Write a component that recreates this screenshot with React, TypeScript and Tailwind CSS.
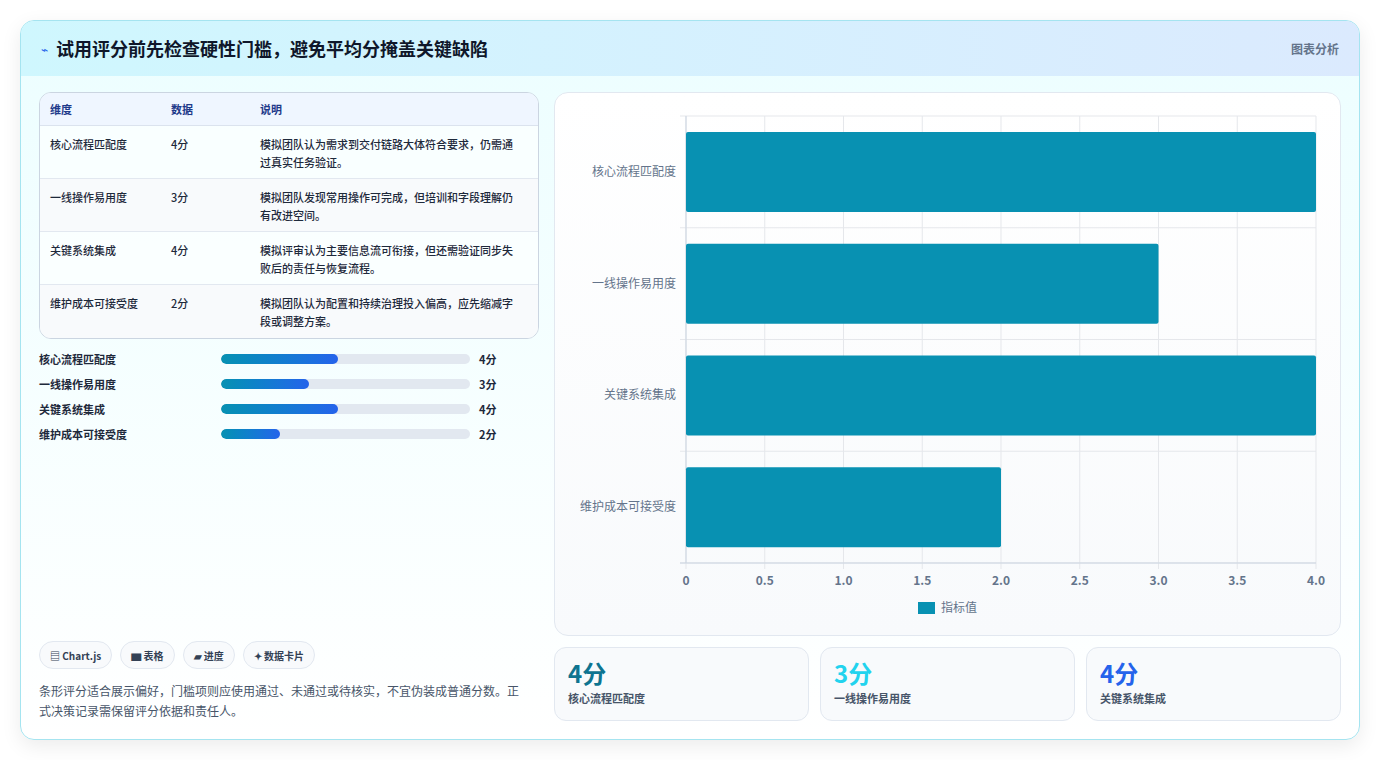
const rows = [
  { name: '核心流程匹配度', v: 4, desc: '模拟团队认为需求到交付链路大体符合要求，仍需通过真实任务验证。' },
  { name: '一线操作易用度', v: 3, desc: '模拟团队发现常用操作可完成，但培训和字段理解仍有改进空间。' },
  { name: '关键系统集成', v: 4, desc: '模拟评审认为主要信息流可衔接，但还需验证同步失败后的责任与恢复流程。' },
  { name: '维护成本可接受度', v: 2, desc: '模拟团队认为配置和持续治理投入偏高，应先缩减字段或调整方案。' },
]

function Chart() {
  const x0 = 131, x1 = 761, y0 = 23, y1 = 470
  const band = (y1 - y0) / 4
  const sx = (v: number) => x0 + ((x1 - x0) * v) / 4
  const ticks = [0, 0.5, 1, 1.5, 2, 2.5, 3, 3.5, 4]
  return (
    <svg width="785" height="544" className="block">
      {ticks.map((t) => (
        <line key={t} x1={sx(t)} x2={sx(t)} y1={y0} y2={y1 + 6} stroke="#e5e7eb" />
      ))}
      {[0, 1, 2, 3, 4].map((i) => (
        <line key={i} x1={x0 - 6} x2={x1} y1={y0 + band * i} y2={y0 + band * i} stroke="#e5e7eb" />
      ))}
      <line x1={x0 - 6} x2={x1} y1={y1} y2={y1} stroke="#cbd5e1" />
      <line x1={x0} x2={x0} y1={y0} y2={y1} stroke="#cbd5e1" />
      {rows.map((r, i) => (
        <g key={r.name}>
          <rect x={x0} y={y0 + band * i + 16} width={sx(r.v) - x0} height={80} rx={2} fill="#0891b2" />
          <text x={x0 - 10} y={y0 + band * i + band / 2 + 4} textAnchor="end" fontSize="12" fill="#64748b">{r.name}</text>
        </g>
      ))}
      {ticks.map((t) => (
        <text key={t} x={sx(t)} y={492} textAnchor="middle" fontSize="12" fontWeight="600" fill="#64748b">
          {t === 0 ? '0' : t.toFixed(1)}
        </text>
      ))}
      <rect x={363} y={509} width={17} height={12} fill="#0891b2" />
      <text x={386} y={519} fontSize="12" fill="#64748b">指标值</text>
    </svg>
  )
}

export default function App() {
  return (
    <div className="w-[1381px] h-[760px] bg-white p-[20px] pr-[21px]" style={{ fontFamily: '"Noto Sans CJK SC", "Noto Sans", sans-serif' }}>
      <div className="h-[720px] rounded-[14px] border border-[#a5e4f0] bg-gradient-to-b from-[#ecfeff] to-white shadow-[0_6px_20px_rgba(0,0,0,0.08)] overflow-hidden flex flex-col">
        <div className="h-[55px] shrink-0 flex items-center justify-between px-[20px] bg-gradient-to-r from-[#cff7fe] to-[#dbeafe]">
          <div className="flex items-center gap-[8px]">
            <span className="text-[#2563eb] text-[12px]">⌁</span>
            <span className="text-[18px] font-bold text-[#0f172a]">试用评分前先检查硬性门槛，避免平均分掩盖关键缺陷</span>
          </div>
          <span className="text-[12px] font-semibold text-[#64748b]">图表分析</span>
        </div>
        <div className="flex-1 flex gap-[15px] px-[18px] pt-[16px] pb-[18px]">
          <div className="w-[503px] flex flex-col">
            <div className="rounded-[12px] border border-[#cbd5e1] bg-white/60 overflow-hidden text-[11px]">
              <div className="grid grid-cols-[121px_89px_1fr] h-[33px] items-center px-[10px] bg-[#eff6ff] border-b border-[#dbe3ee] text-[#1e3a8a] font-semibold">
                <span>维度</span><span>数据</span><span>说明</span>
              </div>
              {rows.map((r, i) => (
                <div key={r.name} className={`grid grid-cols-[121px_89px_1fr] h-[53px] px-[10px] pt-[9px] text-[#1e293b] font-medium leading-[18px] ${i < 3 ? 'border-b border-[#e2e8f0]' : ''} ${i % 2 ? 'bg-[#f8fafc]' : ''}`}>
                  <span>{r.name}</span><span>{r.v}分</span><span className="pr-[6px]">{r.desc}</span>
                </div>
              ))}
            </div>
            <div className="mt-[11px] flex flex-col gap-[7px]">
              {rows.map((r) => (
                <div key={r.name} className="flex items-center h-[18px] text-[11px] font-semibold text-[#1e293b]">
                  <span className="w-[182px]">{r.name}</span>
                  <div className="w-[249px] h-[10px] rounded-full bg-[#e2e8f0] overflow-hidden">
                    <div className="h-full rounded-full bg-gradient-to-r from-[#0891b2] to-[#2563eb]" style={{ width: `${(r.v / 4) * 47}%` }} />
                  </div>
                  <span className="ml-[9px]">{r.v}分</span>
                </div>
              ))}
            </div>
            <div className="mt-auto">
              <div className="flex gap-[8px] text-[10px] font-semibold text-[#334155]">
                {['▤ Chart.js', '▆ 表格', '▰ 进度', '✦ 数据卡片'].map((c) => (
                  <span key={c} className="h-[28px] px-[10px] flex items-center rounded-full border border-[#e2e8f0] bg-[#f8fafc]">{c}</span>
                ))}
              </div>
              <p className="mt-[12px] text-[12px] leading-[20px] text-[#475569] pr-[20px]">
                条形评分适合展示偏好，门槛项则应使用通过、未通过或待核实，不宜伪装成普通分数。正式决策记录需保留评分依据和责任人。
              </p>
            </div>
          </div>
          <div className="flex-1 flex flex-col gap-[11px]">
            <div className="h-[544px] rounded-[14px] border border-[#e2e8f0] bg-gradient-to-b from-white to-[#f8fafc] overflow-hidden">
              <Chart />
            </div>
            <div className="grid grid-cols-3 gap-[11px]">
              {[
                { v: '4分', l: '核心流程匹配度', c: 'text-[#0e7490]' },
                { v: '3分', l: '一线操作易用度', c: 'text-[#22d3ee]' },
                { v: '4分', l: '关键系统集成', c: 'text-[#2563eb]' },
              ].map((s) => (
                <div key={s.l} className="h-[74px] rounded-[12px] border border-[#e2e8f0] bg-[#f8fafc] px-[13px] pt-[10px]">
                  <div className={`text-[24px] font-bold leading-[30px] ${s.c}`}>{s.v}</div>
                  <div className="text-[11px] font-semibold text-[#475569] mt-[2px]">{s.l}</div>
                </div>
              ))}
            </div>
          </div>
        </div>
      </div>
    </div>
  )
}
